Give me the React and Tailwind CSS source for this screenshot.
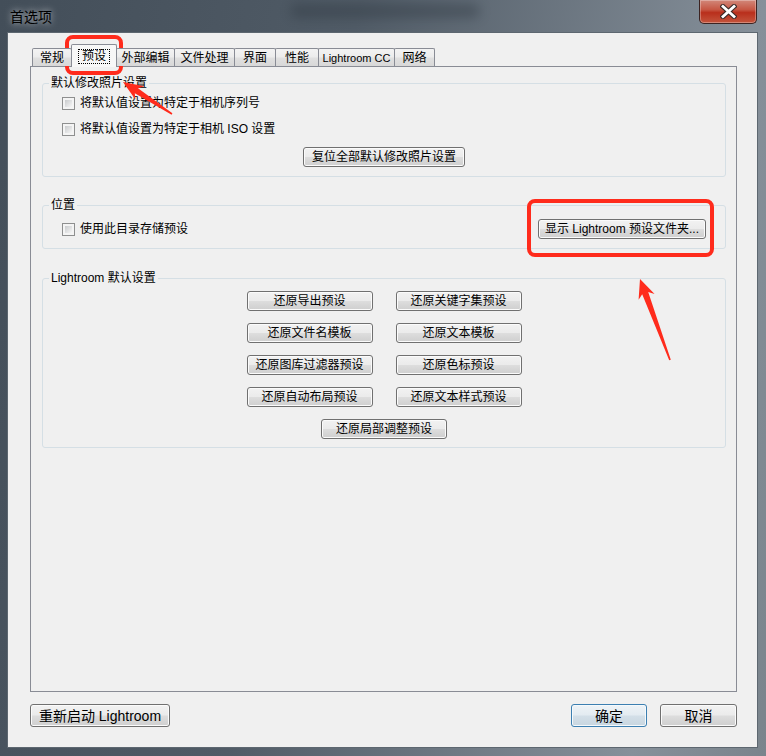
const tabs = [
  { label: "常规", w: "w-[40px]" },
  { label: "预设", w: "w-[46px]", active: true },
  { label: "外部编辑", w: "w-[59px]" },
  { label: "文件处理", w: "w-[61px]" },
  { label: "界面", w: "w-[42px]" },
  { label: "性能", w: "w-[44px]" },
  { label: "Lightroom CC", w: "w-[77px]", latin: true },
  { label: "网络", w: "w-[41px]" },
];

const restoreButtons = [
  "还原导出预设",
  "还原关键字集预设",
  "还原文件名模板",
  "还原文本模板",
  "还原图库过滤器预设",
  "还原色标预设",
  "还原自动布局预设",
  "还原文本样式预设",
];

const btnBase =
  "flex items-center justify-center rounded-[3px] border border-[#707070] bg-[linear-gradient(to_bottom,#f2f2f2_0%,#ebebeb_48%,#dddddd_52%,#cfcfcf_100%)] shadow-[inset_0_0_0_1px_#fbfbfb] text-black";

function Button({ children, className = "" }) {
  return (
    <button className={`${btnBase} h-[20px] text-[12px] leading-[14px] ${className}`}>
      {children}
    </button>
  );
}

function Checkbox({ label }) {
  return (
    <label className="flex h-[14px] items-center gap-[5px] text-[12px] leading-[14px] text-black">
      <span className="block h-[13px] w-[13px] border border-[#8e8f8f] bg-[#f4f4f4] p-[2px]">
        <span className="block h-full w-full bg-linear-to-br from-[#c9cbcd] to-[#f6f6f6]" />
      </span>
      <span>{label}</span>
    </label>
  );
}

function Group({ title, children, className = "" }) {
  return (
    <fieldset className={`rounded-[3px] border border-[#d5dfe5] ${className}`}>
      <legend className="ml-[6px] px-[2px] text-[12px] leading-[14px] text-black">{title}</legend>
      {children}
    </fieldset>
  );
}

export default function App() {
  return (
    <div className="relative h-[756px] w-[766px] overflow-hidden bg-[linear-gradient(100deg,#434e59_0%,#505b66_40%,#86909a_85%,#7a848c_100%)] font-['Liberation_Sans','Noto_Sans_CJK_SC',sans-serif]">
      {/* title bar */}
      <div className="relative flex h-[33px] items-start justify-between pl-[10px] pr-[9px]">
        <div className="pointer-events-none absolute left-[290px] top-[4px] h-[14px] w-[190px] rounded-full bg-[#2c353e] opacity-40 blur-[6px]" />
        <span className="relative mt-[9px] text-[14px] leading-[17px] text-black [text-shadow:0_0_7px_rgba(255,255,255,0.75)]">
          首选项
        </span>
        <button className="relative flex h-[24px] w-[58px] items-center justify-center rounded-b-[5px] border border-t-0 border-[#3c2321] bg-[linear-gradient(to_bottom,#d2887a_0%,#c65643_42%,#b92f1c_55%,#c4553d_100%)] shadow-[inset_0_0_0_1px_rgba(255,255,255,0.3)]">
          <svg width="17" height="15" viewBox="0 0 17 15">
            <path d="M3 2.5 L14 12.5 M14 2.5 L3 12.5" stroke="#3a2a28" strokeWidth="5" strokeLinecap="square" />
            <path d="M3 2.5 L14 12.5 M14 2.5 L3 12.5" stroke="#ffffff" strokeWidth="2.8" strokeLinecap="square" />
          </svg>
        </button>
      </div>

      {/* client area */}
      <div className="ml-[8px] mr-[9px] flex h-[714px] flex-col bg-[#f0f0f0] pl-[22px] pr-[20px] pt-[11px] outline outline-1 outline-[#5d6770]">
        <div className="relative z-10 ml-[2px] flex h-[22px] items-end">
          {tabs.map((tab, i) =>
            tab.active ? (
              <div
                key={tab.label}
                className={`${tab.w} -mb-px -ml-px flex h-[23px] items-start justify-center rounded-t-[2px] border border-b-0 border-[#898c95] bg-[#f7f7f7] pt-[4px]`}
              >
                <span className="border border-dotted border-black px-[3px] text-[12px] leading-[13px] text-black">
                  {tab.label}
                </span>
              </div>
            ) : (
              <div
                key={tab.label}
                className={`${tab.w} ${i === 0 ? "" : "-ml-px"} flex h-[18px] items-center justify-center rounded-t-[2px] border border-b-0 border-[#898c95] bg-[linear-gradient(to_bottom,#f3f3f3_0%,#ececec_48%,#e0e0e0_52%,#d8d8d8_100%)] ${tab.latin ? "text-[11px]" : "text-[12px]"} leading-[14px] text-black`}
              >
                {tab.label}
              </div>
            )
          )}
        </div>

        <div className="h-[626px] border border-[#898c95] bg-[#f0f0f0] pl-[11px] pr-[10px] pt-[9px]">
          <Group title="默认修改照片设置" className="pb-[9px]">
            <div className="px-[19px]">
              <div className="mt-[6px] flex flex-col gap-[12px]">
                <Checkbox label="将默认值设置为特定于相机序列号" />
                <Checkbox label="将默认值设置为特定于相机 ISO 设置" />
              </div>
              <Button className="mx-auto mt-[11px] w-[162px]">复位全部默认修改照片设置</Button>
            </div>
          </Group>

          <Group title="位置" className="mt-[21px] pb-[9px]">
            <div className="mt-[7px] flex items-center justify-between px-[19px]">
              <Checkbox label="使用此目录存储预设" />
              <Button className="w-[168px]">显示 Lightroom 预设文件夹...</Button>
            </div>
          </Group>

          <Group title="Lightroom 默认设置" className="mt-[22px] pb-[8px]">
            <div className="mx-auto mt-[6px] grid w-[275px] grid-cols-2 gap-x-[23px] gap-y-[12px]">
              {restoreButtons.map((label) => (
                <Button key={label} className="w-[126px]">
                  {label}
                </Button>
              ))}
            </div>
            <Button className="mx-auto mt-[12px] w-[126px]">还原局部调整预设</Button>
          </Group>
        </div>

        <div className="mt-[12px] flex h-[23px] items-stretch">
          <button className={`${btnBase} w-[140px] text-[14px] leading-[16px]`}>重新启动 Lightroom</button>
          <button className="ml-auto flex w-[76px] items-center justify-center rounded-[3px] border border-[#3c7fb1] bg-[linear-gradient(to_bottom,#eef3f7_0%,#e3ebf1_48%,#d3dfe8_52%,#c8d6e0_100%)] shadow-[inset_0_0_0_1px_#f4f9fc] text-[14px] leading-[16px] text-black">
            确定
          </button>
          <button className={`${btnBase} ml-[13px] w-[77px] text-[14px] leading-[16px]`}>取消</button>
        </div>
      </div>

      {/* annotations */}
      <svg className="pointer-events-none absolute inset-0" width="766" height="756" viewBox="0 0 766 756">
        <rect x="67" y="37" width="54" height="36" rx="6" fill="none" stroke="#ff2b1c" strokeWidth="4" />
        <rect x="529" y="201" width="183" height="54" rx="6" fill="none" stroke="#ff2b1c" strokeWidth="4" />
        <polygon
          points="123,82 144.2,86.2 138,88.3 172.4,113.3 171.6,114.7 134.8,93.3 135.4,99.6"
          fill="#ff2b1c"
        />
        <polygon
          points="640,279 654.6,293.9 648.2,292 670.8,359.7 669.2,360.3 642.2,294.2 638.6,299.7"
          fill="#ff2b1c"
        />
      </svg>
    </div>
  );
}
